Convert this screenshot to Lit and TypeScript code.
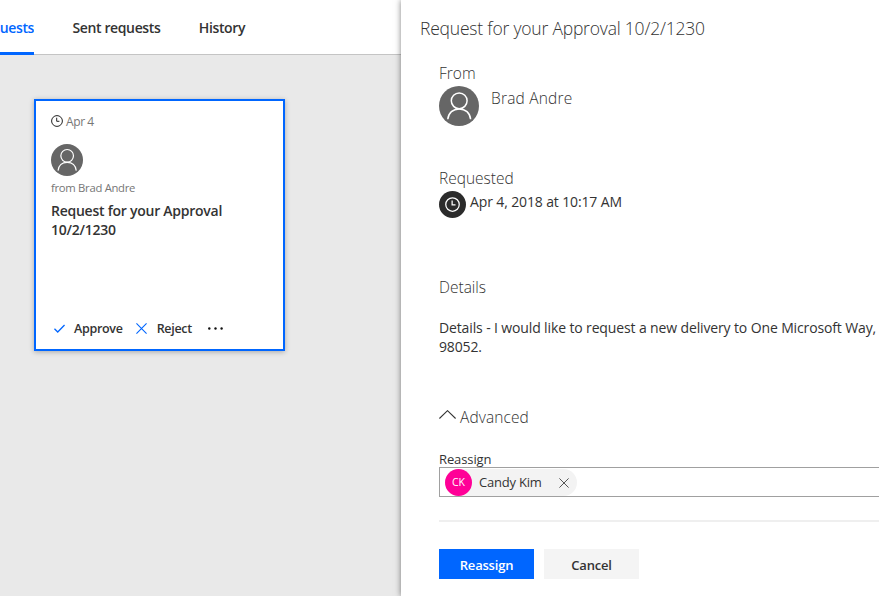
import { LitElement, html, css, svg } from "lit";
import { customElement, property } from "lit/decorators.js";

@customElement("person-avatar")
class PersonAvatar extends LitElement {
  static styles = css`
    :host { display: block; flex: none; }
    svg { display: block; width: 100%; height: 100%; }
  `;
  render() {
    return html`<svg viewBox="0 0 40 40">
      <circle cx="20" cy="20" r="20" fill="#666" />
      <g fill="none" stroke="#fff" stroke-width="1.5">
        <circle cx="20.2" cy="14.8" r="7.9" />
        <path d="M8.8 33.3C9.4 26.8 14 22.9 20.2 22.9s10.8 3.9 11.4 10.4" />
      </g>
    </svg>`;
  }
}

@customElement("line-icon")
class LineIcon extends LitElement {
  static styles = css`
    :host { display: block; flex: none; }
    svg { display: block; width: 100%; height: 100%; fill: none; stroke: currentColor; }
  `;
  @property() name = "";
  render() {
    switch (this.name) {
      case "clock":
        return html`<svg viewBox="0 0 12 12" stroke-width="1">
          <circle cx="6" cy="6" r="5.4" /><path d="M5.7 2.7v3.6h2.7" />
        </svg>`;
      case "check":
        return html`<svg viewBox="0 0 10 8" stroke-width="1.2"><path d="M.4 4.2l3 3L9.6.8" /></svg>`;
      case "cross":
        return html`<svg viewBox="0 0 10 10" stroke-width="1"><path d="M.4.4l9.2 9.2M9.6.4L.4 9.6" /></svg>`;
      case "chevron":
        return html`<svg viewBox="0 0 17 9" stroke-width="1.1"><path d="M.4 8.5L8.5.7l8.1 7.8" /></svg>`;
      case "more":
        return html`<svg viewBox="0 0 15 3" stroke="none">${svg`<g fill="currentColor" stroke="none"><circle cx="1.3" cy="1.5" r="1.2"/><circle cx="7.5" cy="1.5" r="1.2"/><circle cx="13.6" cy="1.5" r="1.2"/></g>`}</svg>`;
      default:
        return html``;
    }
  }
}

@customElement("app-root")
class AppRoot extends LitElement {
  static styles = css`
    :host {
      display: flex; width: 100vw; height: 100vh; overflow: hidden;
      font-family: "Open Sans", "Noto Sans", sans-serif;
      font-stretch: 94%;
      font-size: 14px; line-height: 19px; color: #333; background: #fff;
      white-space: nowrap;
    }
    * { box-sizing: border-box; }
    .list { flex: 0 0 401px; display: flex; flex-direction: column; background: #e9e9e9; }
    .tabs {
      flex: none; height: 55px; display: flex; gap: 38.5px; background: #fff;
      border-bottom: 1px solid #c4c4c4; font-weight: 560; letter-spacing: -.38px;
    }
    .tab { height: 55px; padding-top: 18px; }
    .tab.active {
      width: 34px; display: flex; justify-content: flex-end; overflow: hidden;
      color: #06f; border-bottom: 3px solid #06f;
    }
    .card {
      width: 251px; height: 252px; margin: 44px 0 0 34px; padding: 11px 15px 11px;
      display: flex; flex-direction: column;
      background: #fff; border: 2px solid #06f; box-shadow: 0 1px 5px rgba(0, 0, 0, .28);
    }
    .date {
      display: flex; align-items: center; gap: 3px; height: 18px;
      font-size: 12px; letter-spacing: -.4px; color: #767676;
    }
    .date line-icon { width: 12px; height: 12px; color: #222; }
    .card person-avatar { width: 32px; height: 32px; margin-top: 14px; }
    .sender { height: 18px; margin-top: 3px; line-height: 17px; font-size: 11.3px; letter-spacing: -.3px; color: #767676; }
    .subject { margin-top: 4px; font-weight: 560; letter-spacing: -.25px; white-space: normal; width: 190px; }
    .actions { margin-top: auto; display: flex; align-items: center; font-size: 12.5px; font-weight: 560; letter-spacing: -.3px; }
    .actions line-icon { color: #06f; }
    .actions .check { width: 11px; height: 9px; margin: 0 9px 0 3px; }
    .actions .cross { width: 11px; height: 11px; margin: 0 10px 0 13px; }
    .actions .more { width: 15px; height: 3px; margin-left: 16px; color: #111; }
    .panel {
      flex: 1; min-width: 0; display: flex; flex-direction: column;
      padding: 16px 0 0 19px; background: #fff; box-shadow: 0 0 6px rgba(0, 0, 0, .5);
      z-index: 1;
    }
    .title { height: 24px; line-height: 24px; font-size: 17.5px; font-weight: 300; letter-spacing: -.2px; }
    .body { padding-left: 19px; margin-top: 22px; display: flex; flex-direction: column; }
    .heading { height: 22px; line-height: 22px; font-size: 15.5px; font-weight: 300; }
    .person { display: flex; gap: 12px; margin-top: 2px; }
    .person person-avatar { width: 40px; height: 40px; }
    .name { padding-top: 1px; line-height: 22px; font-size: 15.5px; font-weight: 300; letter-spacing: .2px; }
    .requested { margin-top: 41px; }
    .when { display: flex; gap: 4px; height: 27px; margin-top: 2px; line-height: 22px; letter-spacing: -.13px; }
    .badge {
      flex: none; width: 27px; height: 27px; border-radius: 50%; background: #2b2b2b; color: #fff;
      display: flex; align-items: center; justify-content: center;
    }
    .badge line-icon { width: 15px; height: 15px; }
    .details { margin-top: 58px; }
    .text { margin-top: 20px; letter-spacing: -.13px; }
    .advanced {
      display: flex; align-items: center; gap: 4px; margin-top: 50px;
      font-weight: 360; letter-spacing: .1px;
    }
    .advanced line-icon { width: 17px; height: 9px; margin-top: -6px; }
    .label { margin-top: 22px; height: 17px; line-height: 19px; font-size: 13px; letter-spacing: -.1px; }
    .picker {
      height: 30px; padding: 1px 4px 0 5px; display: flex;
      border: 1px solid #a0a0a0; border-right: 0;
    }
    .chip { display: flex; align-items: center; height: 27px; width: 132px; border-radius: 14px; background: #f3f3f3; }
    .coin {
      width: 27px; height: 27px; border-radius: 50%; background: #ff0097; color: #fff;
      display: flex; align-items: center; justify-content: center; font-size: 10.5px;
    }
    .chip .who { margin-left: 7px; font-size: 13px; letter-spacing: -.2px; }
    .chip line-icon { width: 10px; height: 10px; margin: 0 8px 0 auto; color: #555; }
    .rule { height: 2px; background: #efefef; margin-top: 23px; }
    .buttons { display: flex; gap: 10px; margin-top: 27px; }
    .button {
      width: 95px; height: 30px; line-height: 32px; text-align: center;
      font-size: 13px; font-weight: 560; letter-spacing: -.2px; background: #f4f4f4;
    }
    .button.primary { background: #06f; color: #fff; }
  `;

  render() {
    return html`
      <div class="list">
        <div class="tabs">
          <div class="tab active"><span>Received requests</span></div>
          <div class="tab">Sent requests</div>
          <div class="tab">History</div>
        </div>
        <div class="card">
          <div class="date"><line-icon name="clock"></line-icon><span>Apr 4</span></div>
          <person-avatar></person-avatar>
          <div class="sender">from Brad Andre</div>
          <div class="subject">Request for your Approval 10/2/1230</div>
          <div class="actions">
            <line-icon class="check" name="check"></line-icon><span>Approve</span>
            <line-icon class="cross" name="cross"></line-icon><span>Reject</span>
            <line-icon class="more" name="more"></line-icon>
          </div>
        </div>
      </div>
      <div class="panel">
        <div class="title">Request for your Approval 10/2/1230</div>
        <div class="body">
          <div class="heading">From</div>
          <div class="person"><person-avatar></person-avatar><div class="name">Brad Andre</div></div>
          <div class="heading requested">Requested</div>
          <div class="when">
            <div class="badge"><line-icon name="clock"></line-icon></div>
            <span>Apr 4, 2018 at 10:17 AM</span>
          </div>
          <div class="heading details">Details</div>
          <div class="text">Details - I would like to request a new delivery to One Microsoft Way,<br />98052.</div>
          <div class="heading advanced"><line-icon name="chevron"></line-icon><span>Advanced</span></div>
          <div class="label">Reassign</div>
          <div class="picker">
            <div class="chip">
              <div class="coin">CK</div><span class="who">Candy Kim</span>
              <line-icon name="cross"></line-icon>
            </div>
          </div>
          <div class="rule"></div>
          <div class="buttons">
            <div class="button primary">Reassign</div>
            <div class="button">Cancel</div>
          </div>
        </div>
      </div>
    `;
  }
}
